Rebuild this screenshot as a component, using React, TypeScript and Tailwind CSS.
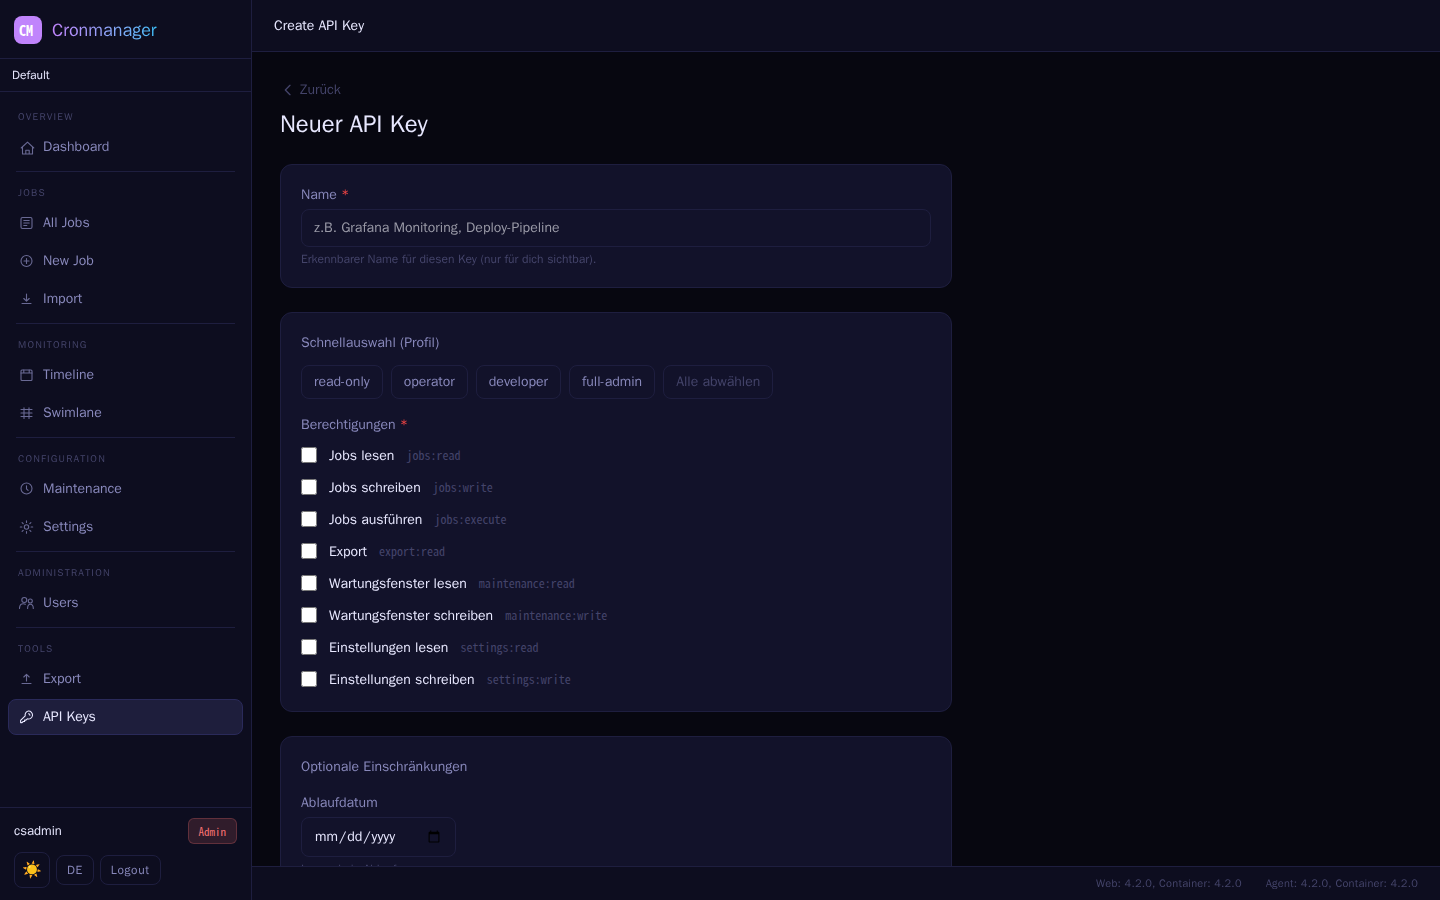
import type { ReactNode } from "react";

const SANS = "font-['WenQuanYi_Zen_Hei','Liberation_Sans',Arial,sans-serif]";
const MONO = "font-['Noto_Sans_Mono_CJK_JP','Noto_Sans_Mono_CJK_SC','Liberation_Mono',monospace]";

type NavItem = { label: string; icon: ReactNode; active?: boolean };
type NavGroup = { title: string; items: NavItem[] };

const navGroups: NavGroup[] = [
    {
        title: "OVERVIEW",
        items: [
            {
                label: "Dashboard",
                icon: <path d="M2.2 9 8.5 3.2 14.8 9M3.5 8.2V15h10V8.2M6.8 15v-3.8h3.4V15" />,
            },
        ],
    },
    {
        title: "JOBS",
        items: [
            {
                label: "All Jobs",
                icon: (
                    <>
                        <rect x="2" y="2.5" width="11" height="11" rx="1.5" />
                        <path d="M4.8 5.5h5.4M4.8 8h5.4M4.8 10.5h3" />
                    </>
                ),
            },
            {
                label: "New Job",
                icon: (
                    <>
                        <circle cx="7.5" cy="8" r="5.5" />
                        <path d="M7.5 5.5v5M5 8h5" />
                    </>
                ),
            },
            { label: "Import", icon: <path d="M7.5 3v7M4.8 7.5l2.7 2.7 2.7-2.7M3 12.5h9" /> },
        ],
    },
    {
        title: "MONITORING",
        items: [
            {
                label: "Timeline",
                icon: (
                    <>
                        <rect x="2" y="3" width="11" height="10.5" rx="1" />
                        <path d="M2 6h11M4.8 3v2.5M10.2 3v2.5" />
                    </>
                ),
            },
            {
                label: "Swimlane",
                icon: <path d="M2 4.5h11M2 8h11M2 11.5h11M5 2.8v10.7M10 2.8v10.7" />,
            },
        ],
    },
    {
        title: "CONFIGURATION",
        items: [
            {
                label: "Maintenance",
                icon: (
                    <>
                        <circle cx="7.5" cy="7.5" r="5.5" />
                        <path d="M7.5 4.8v3l1.6 1.6" />
                    </>
                ),
            },
            {
                label: "Settings",
                icon: (
                    <>
                        <circle cx="7.5" cy="8" r="2.2" />
                        <path d="M7.5 1.8v1.6M7.5 12.6v1.6M1.3 8h1.6M12.1 8h1.6M3.1 3.6l1.1 1.1M10.8 11.3l1.1 1.1M3.1 12.4l1.1-1.1M10.8 4.7l1.1-1.1" />
                    </>
                ),
            },
        ],
    },
    {
        title: "ADMINISTRATION",
        items: [
            {
                label: "Users",
                icon: (
                    <>
                        <circle cx="5.3" cy="5" r="2.5" />
                        <circle cx="11.3" cy="6" r="2" />
                        <path d="M.5 13.5c0-3 1.6-4.8 3.8-4.8.8 0 1.4.2 2 .6M8.6 13.5c0-2.8 1-4.3 2.7-4.3s3 1.5 3 4.3" />
                    </>
                ),
            },
        ],
    },
    {
        title: "TOOLS",
        items: [
            { label: "Export", icon: <path d="M7.5 10V3.3M4.8 6l2.7-2.7L10.2 6M3 12.5h9" /> },
            {
                label: "API Keys",
                active: true,
                icon: (
                    <path d="M9.3 2a4 4 0 1 1-1 7.8L7 11.1H5.6v1.4H4.2l-1.1 1.1H1.6v-2.2l4.6-4.6A4 4 0 0 1 9.3 2ZM9.5 4.8a1.4 1.4 0 0 1 1.4 1.4" />
                ),
            },
        ],
    },
];

const profiles = ["read-only", "operator", "developer", "full-admin"];

const permissions = [
    { label: "Jobs lesen", scope: "jobs:read" },
    { label: "Jobs schreiben", scope: "jobs:write" },
    { label: "Jobs ausführen", scope: "jobs:execute" },
    { label: "Export", scope: "export:read" },
    { label: "Wartungsfenster lesen", scope: "maintenance:read" },
    { label: "Wartungsfenster schreiben", scope: "maintenance:write" },
    { label: "Einstellungen lesen", scope: "settings:read" },
    { label: "Einstellungen schreiben", scope: "settings:write" },
];

function NavLink({ label, icon, active }: NavItem) {
    return (
        <a
            href="#"
            aria-current={active ? "page" : undefined}
            className={`mb-0.5 flex h-9 items-center gap-2 rounded-lg border px-2.5 text-sm ${
                active
                    ? "border-[#2a2a5a] bg-[#1e1e3c] text-[#e8e8ff]"
                    : "border-transparent text-[#8888bb]"
            }`}
        >
            <svg
                aria-hidden
                viewBox="0 0 16 16"
                fill="none"
                stroke="currentColor"
                strokeWidth="1.1"
                strokeLinecap="round"
                strokeLinejoin="round"
                className={`size-4 shrink-0 ${active ? "" : "opacity-75"}`}
            >
                {icon}
            </svg>
            {label}
        </a>
    );
}

function Sidebar() {
    return (
        <aside className="flex w-[252px] shrink-0 flex-col border-r border-[#1e1e3f] bg-[#0d0d1f]">
            <div className="flex shrink-0 items-center gap-2.5 border-b border-[#1e1e3f] px-3.5 pt-4 pb-3.5">
                <div
                    className={`flex size-7 items-center rounded-lg bg-[#c084fc] pl-[5px] text-sm font-bold text-white ${MONO}`}
                >
                    CM
                </div>
                <span className="bg-linear-to-r from-[#c084fc] to-[#38bdf8] bg-clip-text text-lg text-transparent">
                    Cronmanager
                </span>
            </div>
            <div className="flex h-[33px] shrink-0 items-center border-b border-[#1e1e3f] px-3 text-xs text-[#e8e8ff]">
                Default
            </div>
            <nav className="flex-1 overflow-y-auto px-2 pt-1 [scrollbar-width:none]">
                {navGroups.map((group, i) => (
                    <div key={group.title}>
                        {i > 0 && <hr className="mx-2 mt-1.5 border-[#1e1e3f]" />}
                        <div className="px-2.5 pt-3.5 pb-[5px] text-[10px] leading-[14px] tracking-[0.12em] text-[#44446a]">
                            {group.title}
                        </div>
                        {group.items.map((item) => (
                            <NavLink key={item.label} {...item} />
                        ))}
                    </div>
                ))}
            </nav>
            <div className="shrink-0 border-t border-[#1e1e3f] px-3.5 pt-2.5 pb-3">
                <div className="mb-2 flex items-center justify-between">
                    <span className="text-[13px] text-[#e8e8ff]">csadmin</span>
                    <span
                        className={`flex h-[26px] items-center rounded-md border border-[#f87171]/25 bg-[#f87171]/15 px-2.5 text-[11px] text-[#f87171] ${MONO}`}
                    >
                        Admin
                    </span>
                </div>
                <div className="flex items-center gap-1.5">
                    <button
                        aria-label="Theme"
                        className="size-9 rounded-lg border border-[#1e1e3f] text-base"
                    >
                        ☀️
                    </button>
                    <button className="h-[30px] rounded-lg border border-[#1e1e3f] px-2.5 text-xs tracking-wider text-[#8888bb]">
                        DE
                    </button>
                    <button className="h-[30px] rounded-lg border border-[#1e1e3f] px-2.5 text-xs tracking-wider text-[#8888bb]">
                        Logout
                    </button>
                </div>
            </div>
        </aside>
    );
}

function Card({ children }: { children: ReactNode }) {
    return (
        <section className="rounded-xl border border-[#1e1e3f] bg-[#12122a] p-5 text-sm text-[#8888bb]">
            {children}
        </section>
    );
}

function Required() {
    return <span className="text-[#ef4444]">*</span>;
}

export default function App() {
    return (
        <div className={`flex h-screen bg-[#070710] text-[#e8e8ff] ${SANS}`}>
            <Sidebar />
            <div className="flex min-w-0 flex-1 flex-col">
                <header className="flex h-[52px] shrink-0 items-center border-b border-[#1e1e3f] bg-[#0d0d1f] px-[22px] text-sm">
                    Create API Key
                </header>

                <main className="min-h-0 flex-1 overflow-y-auto p-7 [scrollbar-width:none]">
                    <div className="max-w-2xl">
                        <a href="#" className="flex items-center gap-1 text-sm text-[#44446a]">
                            <svg
                                aria-hidden
                                viewBox="0 0 24 24"
                                fill="none"
                                stroke="currentColor"
                                strokeWidth="2"
                                strokeLinecap="round"
                                strokeLinejoin="round"
                                className="size-4"
                            >
                                <path d="M15 19l-7-7 7-7" />
                            </svg>
                            Zurück
                        </a>
                        <h1 className="mt-2 mb-6 text-2xl">Neuer API Key</h1>

                        <form className="flex flex-col gap-6">
                            <Card>
                                <label htmlFor="name" className="mb-1 block">
                                    Name <Required />
                                </label>
                                <input
                                    id="name"
                                    type="text"
                                    placeholder="z.B. Grafana Monitoring, Deploy-Pipeline"
                                    className="block w-full rounded-lg border border-[#1e1e3f] bg-transparent px-3 py-2 text-[#e8e8ff] placeholder:text-[#9999a6]"
                                />
                                <p className="mt-1 text-xs text-[#44446a]">
                                    Erkennbarer Name für diesen Key (nur für dich sichtbar).
                                </p>
                            </Card>

                            <Card>
                                <p className="mb-3">Schnellauswahl (Profil)</p>
                                <div className="mb-4 flex flex-wrap gap-2">
                                    {profiles.map((profile) => (
                                        <button
                                            key={profile}
                                            type="button"
                                            className="rounded-lg border border-[#1e1e3f] px-3 py-1.5"
                                        >
                                            {profile}
                                        </button>
                                    ))}
                                    <button
                                        type="button"
                                        className="rounded-lg border border-[#1e1e3f] px-3 py-1.5 text-[#44446a]"
                                    >
                                        Alle abwählen
                                    </button>
                                </div>
                                <fieldset>
                                    <legend className="mb-2">
                                        Berechtigungen <Required />
                                    </legend>
                                    <div className="space-y-2">
                                        {permissions.map(({ label, scope }) => (
                                            <label key={scope} className="flex h-6 items-center gap-3">
                                                <input type="checkbox" className="size-4" />
                                                <span className="leading-normal text-[#e8e8ff]">{label}</span>
                                                <span className={`text-xs text-[#44446a] ${MONO}`}>{scope}</span>
                                            </label>
                                        ))}
                                    </div>
                                </fieldset>
                            </Card>

                            <Card>
                                <p className="mb-4">Optionale Einschränkungen</p>
                                <label htmlFor="expires" className="mb-1 block">
                                    Ablaufdatum
                                </label>
                                <input
                                    id="expires"
                                    type="date"
                                    className="block h-10 rounded-lg border border-[#1e1e3f] bg-transparent px-3 py-2 text-[#e8e8ff]"
                                />
                                <p className="mt-1 text-xs text-[#44446a]">Leer = kein Ablauf</p>
                            </Card>
                        </form>
                    </div>
                </main>

                <footer className="flex h-[34px] shrink-0 items-center justify-end gap-6 border-t border-[#1e1e3f] bg-[#0d0d1f] px-[22px] text-[11px] tracking-[0.02em] text-[#44446a]">
                    <span>Web: 4.2.0, Container: 4.2.0</span>
                    <span>Agent: 4.2.0, Container: 4.2.0</span>
                </footer>
            </div>
        </div>
    );
}
